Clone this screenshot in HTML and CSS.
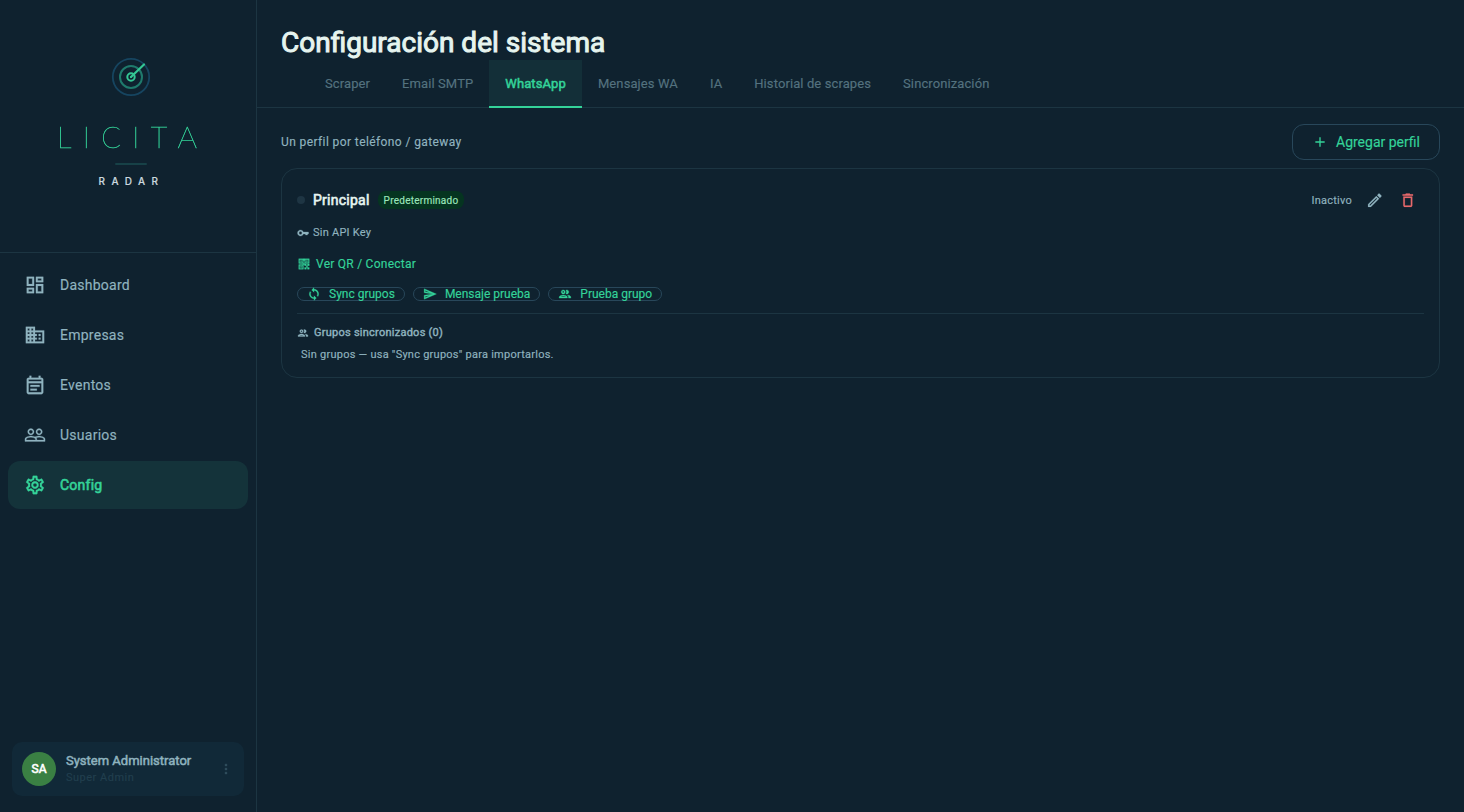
FILE: index.html
```html
<!DOCTYPE html>
<html lang="es">
<head>
<meta charset="utf-8">
<title>Licita Radar</title>
<link rel="stylesheet" href="styles.css">
</head>
<body>
<aside class="sidebar">
  <div class="brand">
    <svg class="brand-mark" viewBox="0 0 40 40">
      <circle cx="20" cy="20" r="18.2" fill="none" stroke="#164560" stroke-width="1.8"/>
      <circle cx="20" cy="20" r="11" fill="none" stroke="#1f7a6c" stroke-width="2"/>
      <circle cx="20" cy="20" r="3.7" fill="none" stroke="#34c794" stroke-width="2"/>
      <circle cx="20" cy="20" r="1" fill="#34c794"/>
      <path d="M20 20L33 7.5" stroke="#34c794" stroke-width="2.2" stroke-linecap="round"/>
    </svg>
    <div class="brand-name"><span>L</span><span>I</span><span>C</span><span>I</span><span>T</span><span class="wide">A</span></div>
    <div class="brand-line"></div>
    <div class="brand-sub">RADAR</div>
  </div>
  <nav class="nav">
    <a class="nav-item"><svg class="i22" viewBox="0 0 24 24"><path d="M19 5v2h-4V5h4M9 5v6H5V5h4m10 8v6h-4v-6h4M9 17v2H5v-2h4M21 3h-8v6h8V3zM11 3H3v10h8V3zm10 8h-8v10h8V11zm-10 4H3v6h8v-6z"/></svg>Dashboard</a>
    <a class="nav-item"><svg class="i22" viewBox="0 0 24 24"><path d="M12 7V3H2v18h20V7H12zM6 19H4v-2h2v2zm0-4H4v-2h2v2zm0-4H4V9h2v2zm0-4H4V5h2v2zm4 12H8v-2h2v2zm0-4H8v-2h2v2zm0-4H8V9h2v2zm0-4H8V5h2v2zm10 12h-8v-2h2v-2h-2v-2h2v-2h-2V9h8v10zm-2-8h-2v2h2v-2zm0 4h-2v2h2v-2z"/></svg>Empresas</a>
    <a class="nav-item"><svg class="i22" viewBox="0 0 24 24"><path d="M19 4h-1V2h-2v2H8V2H6v2H5c-1.11 0-1.99.9-1.99 2L3 20c0 1.1.89 2 2 2h14c1.1 0 2-.9 2-2V6c0-1.1-.9-2-2-2zm0 16H5V10h14v10zm0-12H5V6h14v2zM7 12h10v2H7zm0 4h7v2H7z"/></svg>Eventos</a>
    <a class="nav-item"><svg class="i22" viewBox="0 0 24 24"><path d="M16.5 13c-1.2 0-3.07.34-4.5 1-1.43-.67-3.3-1-4.5-1C5.33 13 1 14.08 1 16.25V19h22v-2.75c0-2.17-4.33-3.25-6.5-3.25zm-4 4.5h-10v-1.25c0-.54 2.56-1.75 5-1.75s5 1.21 5 1.75v1.25zm9 0H14v-1.25c0-.46-.2-.86-.52-1.22.88-.3 1.96-.53 3.02-.53 2.44 0 5 1.21 5 1.75v1.25zM7.5 12c1.93 0 3.5-1.57 3.5-3.5S9.43 5 7.5 5 4 6.57 4 8.5 5.57 12 7.5 12zm0-5.5c1.1 0 2 .9 2 2s-.9 2-2 2-2-.9-2-2 .9-2 2-2zm9 5.5c1.93 0 3.5-1.57 3.5-3.5S18.43 5 16.5 5 13 6.57 13 8.5s1.57 3.5 3.5 3.5zm0-5.5c1.1 0 2 .9 2 2s-.9 2-2 2-2-.9-2-2 .9-2 2-2z"/></svg>Usuarios</a>
    <a class="nav-item active"><svg class="i22" viewBox="0 0 24 24"><path d="M19.43 12.98c.04-.32.07-.64.07-.98 0-.34-.03-.66-.07-.98l2.11-1.65c.19-.15.24-.42.12-.64l-2-3.46c-.09-.16-.26-.25-.44-.25-.06 0-.12.01-.17.03l-2.49 1c-.52-.4-1.08-.73-1.69-.98l-.38-2.65C14.46 2.18 14.25 2 14 2h-4c-.25 0-.46.18-.49.42l-.38 2.65c-.61.25-1.17.59-1.69.98l-2.49-1c-.06-.02-.12-.03-.18-.03-.17 0-.34.09-.43.25l-2 3.46c-.13.22-.07.49.12.64l2.11 1.65c-.04.32-.07.65-.07.98 0 .33.03.66.07.98l-2.11 1.65c-.19.15-.24.42-.12.64l2 3.46c.09.16.26.25.44.25.06 0 .12-.01.17-.03l2.49-1c.52.4 1.08.73 1.69.98l.38 2.65c.03.24.24.42.49.42h4c.25 0 .46-.18.49-.42l.38-2.65c.61-.25 1.17-.59 1.69-.98l2.49 1c.06.02.12.03.18.03.17 0 .34-.09.43-.25l2-3.46c.12-.22.07-.49-.12-.64l-2.11-1.65zm-1.98-1.71c.04.31.05.52.05.73 0 .21-.02.43-.05.73l-.14 1.13.89.7 1.08.84-.7 1.21-1.27-.51-1.04-.42-.9.68c-.43.32-.84.56-1.25.73l-1.06.43-.16 1.13-.2 1.35h-1.4l-.19-1.35-.16-1.13-1.06-.43c-.43-.18-.83-.41-1.23-.71l-.91-.7-1.06.43-1.27.51-.7-1.21 1.08-.84.89-.7-.14-1.13c-.03-.31-.05-.54-.05-.74s.02-.43.05-.73l.14-1.13-.89-.7-1.08-.84.7-1.21 1.27.51 1.04.42.9-.68c.43-.32.84-.56 1.25-.73l1.06-.43.16-1.13.2-1.35h1.39l.19 1.35.16 1.13 1.06.43c.43.18.83.41 1.23.71l.91.7 1.06-.43 1.27-.51.7 1.21-1.07.85-.89.7.14 1.13zM12 8c-2.21 0-4 1.79-4 4s1.79 4 4 4 4-1.79 4-4-1.79-4-4-4zm0 6c-1.1 0-2-.9-2-2s.9-2 2-2 2 .9 2 2-.9 2-2 2z"/></svg>Config</a>
  </nav>
  <div class="user">
    <div class="avatar">SA</div>
    <div class="user-text">
      <div class="user-name">System Administrator</div>
      <div class="user-role">Super Admin</div>
    </div>
    <svg class="i16 more" viewBox="0 0 24 24"><path d="M12 8c1.1 0 2-.9 2-2s-.9-2-2-2-2 .9-2 2 .9 2 2 2zm0 2c-1.1 0-2 .9-2 2s.9 2 2 2 2-.9 2-2-.9-2-2-2zm0 6c-1.1 0-2 .9-2 2s.9 2 2 2 2-.9 2-2-.9-2-2-2z"/></svg>
  </div>
</aside>
<main class="main">
  <h1 class="title">Configuración del sistema</h1>
  <div class="tabs">
    <a class="tab">Scraper</a>
    <a class="tab">Email SMTP</a>
    <a class="tab active">WhatsApp</a>
    <a class="tab">Mensajes WA</a>
    <a class="tab">IA</a>
    <a class="tab">Historial de scrapes</a>
    <a class="tab">Sincronización</a>
  </div>
  <section class="content">
    <div class="toolbar">
      <span class="hint">Un perfil por teléfono / gateway</span>
      <button class="add"><svg class="i16" viewBox="0 0 24 24"><path d="M19 13h-6v6h-2v-6H5v-2h6V5h2v6h6v2z"/></svg>Agregar perfil</button>
    </div>
    <article class="card">
      <div class="card-head">
        <span class="dot"></span>
        <span class="name">Principal</span>
        <span class="badge">Predeterminado</span>
        <span class="status">Inactivo</span>
        <span class="icon-btn"><svg class="i18" viewBox="0 0 24 24"><path d="M14.06 9.02l.92.92L5.92 19H5v-.92l9.06-9.06M17.66 3c-.25 0-.51.1-.7.29l-1.83 1.83 3.75 3.75 1.83-1.83c.39-.39.39-1.02 0-1.41l-2.34-2.34c-.2-.2-.45-.29-.71-.29zm-3.6 3.19L3 17.25V21h3.75L17.81 9.94l-3.75-3.75z"/></svg></span>
        <span class="icon-btn danger"><svg class="i18" viewBox="0 0 24 24"><path d="M6 19c0 1.1.9 2 2 2h8c1.1 0 2-.9 2-2V7H6v12zM8 9h8v10H8V9zm7.5-5l-1-1h-5l-1 1H5v2h14V4z"/></svg></span>
      </div>
      <div class="key-row"><svg class="i12" viewBox="0 0 24 24"><path d="M12.65 10C11.83 7.67 9.61 6 7 6c-3.31 0-6 2.69-6 6s2.69 6 6 6c2.61 0 4.83-1.67 5.65-4H17v2h4v-2h2v-4H12.65zM7 15c-1.65 0-3-1.35-3-3s1.35-3 3-3 3 1.35 3 3-1.35 3-3 3z"/></svg>Sin API Key</div>
      <a class="qr-row"><svg class="i14" viewBox="0 0 24 24"><path fill-rule="evenodd" d="M3 3h8v8H3zM4.5 4.5v5h5v-5zM6 6h2v2H6zM3 13h8v8H3zM4.5 14.5v5h5v-5zM6 16h2v2H6zM13 3h8v8h-8zM14.5 4.5v5h5v-5zM16 6h2v2h-2zM13 12h3v3h-3zM16 15h2v3h-2zM18 12h3v3h-3zM13 18h3v3h-3zM18 18h3v3h-3zM11 3h2v3h-2zM10 11h3v2h-3z"/></svg>Ver QR / Conectar</a>
      <div class="actions">
        <button class="pill"><svg class="i14" viewBox="0 0 24 24"><path d="M12 4V1L8 5l4 4V6c3.31 0 6 2.69 6 6 0 1.01-.25 1.97-.7 2.8l1.46 1.46C19.54 15.03 20 13.57 20 12c0-4.42-3.58-8-8-8zm0 14c-3.31 0-6-2.69-6-6 0-1.01.25-1.97.7-2.8L5.24 7.74C4.46 8.97 4 10.43 4 12c0 4.42 3.58 8 8 8v3l4-4-4-4v3z"/></svg>Sync grupos</button>
        <button class="pill"><svg class="i14" viewBox="0 0 24 24"><path d="M4.01 6.03l7.51 3.22-7.52-1 .01-2.22m7.5 8.72L4 17.97v-2.22l7.51-1M2.01 3L2 10l15 2-15 2 .01 7L23 12 2.01 3z"/></svg>Mensaje prueba</button>
        <button class="pill"><svg class="i14" viewBox="0 0 24 24"><path d="M9 13.75c-2.34 0-7 1.17-7 3.5V19h14v-1.75c0-2.33-4.66-3.5-7-3.5zM4.34 17c.84-.58 2.87-1.25 4.66-1.25s3.82.67 4.66 1.25H4.34zM9 12c1.93 0 3.5-1.57 3.5-3.5S10.93 5 9 5 5.5 6.57 5.5 8.5 7.07 12 9 12zm0-5c.83 0 1.5.67 1.5 1.5S9.83 10 9 10s-1.5-.67-1.5-1.5S8.17 7 9 7zm7.04 6.81c1.16.84 1.96 1.96 1.96 3.44V19h4v-1.75c0-2.02-3.5-3.17-5.96-3.44zM15 12c1.93 0 3.5-1.57 3.5-3.5S16.93 5 15 5c-.54 0-1.04.13-1.5.35.63.89 1 1.98 1 3.15s-.37 2.26-1 3.15c.46.22.96.35 1.5.35z"/></svg>Prueba grupo</button>
      </div>
      <div class="groups">
        <div class="groups-title"><svg class="i12" viewBox="0 0 24 24"><path d="M9 13.75c-2.34 0-7 1.17-7 3.5V19h14v-1.75c0-2.33-4.66-3.5-7-3.5zM4.34 17c.84-.58 2.87-1.25 4.66-1.25s3.82.67 4.66 1.25H4.34zM9 12c1.93 0 3.5-1.57 3.5-3.5S10.93 5 9 5 5.5 6.57 5.5 8.5 7.07 12 9 12zm0-5c.83 0 1.5.67 1.5 1.5S9.83 10 9 10s-1.5-.67-1.5-1.5S8.17 7 9 7zm7.04 6.81c1.16.84 1.96 1.96 1.96 3.44V19h4v-1.75c0-2.02-3.5-3.17-5.96-3.44zM15 12c1.93 0 3.5-1.57 3.5-3.5S16.93 5 15 5c-.54 0-1.04.13-1.5.35.63.89 1 1.98 1 3.15s-.37 2.26-1 3.15c.46.22.96.35 1.5.35z"/></svg>Grupos sincronizados (0)</div>
        <div class="groups-empty">Sin grupos — usa "Sync grupos" para importarlos.</div>
      </div>
    </article>
  </section>
</main>
</body>
</html>
```
FILE: styles.css
```css
* { box-sizing: border-box; }
body {
  margin: 0;
  height: 812px;
  display: flex;
  overflow: hidden;
  background: #0f222f;
  color: #8fb3bf;
  font: 400 14px/20px Roboto, "Liberation Sans", sans-serif;
  white-space: nowrap;
  -webkit-text-stroke: .15px;
}
svg { display: block; flex: none; fill: currentColor; }
.i12 { width: 12px; height: 12px; }
.i14 { width: 14px; height: 14px; }
.i12, .i14 { stroke: currentColor; stroke-width: .5px; }
.i16 { width: 16px; height: 16px; }
.i18 { width: 18px; height: 18px; stroke: currentColor; stroke-width: .2px; }
.i22 { width: 22px; height: 22px; stroke: currentColor; stroke-width: .25px; }
button { font: inherit; background: none; margin: 0; cursor: pointer; }

/* Sidebar */
.sidebar { width: 257px; flex: none; display: flex; flex-direction: column; border-right: 1px solid #1c3542; }
.brand { height: 253px; padding: 57px 0 0 6px; display: flex; flex-direction: column; align-items: center; border-bottom: 1px solid #1c3542; }
.brand-mark { width: 40px; height: 40px; }
.brand-name { display: flex; width: 140px; margin: 22px 0 0 -9px; font: 100 29px/36px Lato, Inter, sans-serif; color: #34d399; justify-content: space-between; -webkit-text-stroke: .45px; will-change: transform; }
.wide { transform: scaleX(1.06); }
.brand-line { width: 32px; height: 2px; margin-top: 8px; background: #174147; border-radius: 1px; }
.brand-sub { margin: 8px 0 0 1px; font: 500 10px/16px Inter, sans-serif; letter-spacing: 6.4px; color: #cbd8df; }
.nav { padding: 8px; display: flex; flex-direction: column; gap: 2px; }
.nav-item { height: 48px; padding: 0 16px; display: flex; align-items: center; gap: 14px; border-radius: 12px; letter-spacing: .25px; }
.nav-item.active { background: #14333a; color: #34d399; -webkit-text-stroke: .6px; }
.user { margin: auto 12px 16px; height: 54px; padding: 0 10px; display: flex; align-items: center; gap: 10px; border-radius: 10px; background: #112938; }
.avatar { width: 34px; height: 34px; border-radius: 50%; background: #3a8043; color: #fff; font-size: 12px; line-height: 34px; text-align: center; -webkit-text-stroke: .6px; }
.user-text { flex: 1; }
.user-name { font-size: 13px; line-height: 16px; padding-bottom: 1px; margin-top: -1px; -webkit-text-stroke: .5px; }
.user-role { font-size: 11px; line-height: 15px; letter-spacing: .5px; color: #213f4e; }
.more { color: #2f4d5c; }

/* Main column */
.main { flex: 1; min-width: 0; }
.title { margin: 0; padding: 25px 24px 0; height: 60px; font-weight: 400; font-size: 28px; line-height: 35px; color: #e6f4ef; -webkit-text-stroke: 1px; }
.tabs { height: 48px; padding-left: 52px; display: flex; border-bottom: 1px solid #1c3542; }
.tab { height: 48px; padding: 0 16px; font-size: 13px; line-height: 48px; letter-spacing: .1px; color: #54727f; }
.tab.active { color: #34d399; background: #132f38; box-shadow: inset 0 -2px #34d399; -webkit-text-stroke: .5px; }
.content { padding: 16px 24px; }
.toolbar { display: flex; align-items: center; justify-content: space-between; height: 36px; margin-bottom: 8px; }
.hint { font-size: 12px; letter-spacing: .4px; }
.add { height: 36px; width: 148px; padding: 0 0 0 19px; display: flex; align-items: center; gap: 8px; border: 1px solid #28475a; border-radius: 12px; color: #34d399; }

/* Profile card */
.card { height: 210px; padding: 15px; border: 1px solid #1c3542; border-radius: 16px; display: flex; flex-direction: column; font-size: 11px; letter-spacing: .25px; }
.card-head { height: 32px; display: flex; align-items: center; }
.dot { width: 8px; height: 8px; border-radius: 50%; background: #1e3543; margin-right: 8px; }
.name { font-size: 14px; letter-spacing: .25px; color: #e6f4ef; -webkit-text-stroke: .6px; margin-right: 8px; }
.badge { height: 18px; padding: 1px 6px 0; border-radius: 8px; background: #053420; color: #9be5bb; font-size: 10px; line-height: 18px; }
.status { margin-left: auto; margin-right: 6px; padding-top: 1px; }
.icon-btn { width: 33px; height: 33px; display: flex; align-items: center; justify-content: center; }
.icon-btn svg { transform: translate(-.2px, .3px); }
.danger { color: #e86a6c; }
.key-row { height: 16px; margin-top: 9px; display: flex; align-items: center; gap: 4px; }
.qr-row { height: 16px; margin-top: 15px; display: flex; align-items: center; gap: 5px; font-size: 12px; color: #34d399; }
.actions { display: flex; gap: 8px; margin-top: 15px; }
.pill { height: 14px; padding: 0 9px; display: flex; align-items: center; gap: 8px; border: 1px solid #28475a; border-radius: 7px; font-size: 12px; line-height: 12px; letter-spacing: 0; color: #34d399; }
.groups { margin-top: 12px; padding-top: 11px; border-top: 1px solid #1c3542; }
.groups-title { height: 16px; display: flex; align-items: center; gap: 5px; -webkit-text-stroke: .4px; }
.groups-empty { margin-top: 6px; padding-left: 4px; line-height: 16px; }
```
